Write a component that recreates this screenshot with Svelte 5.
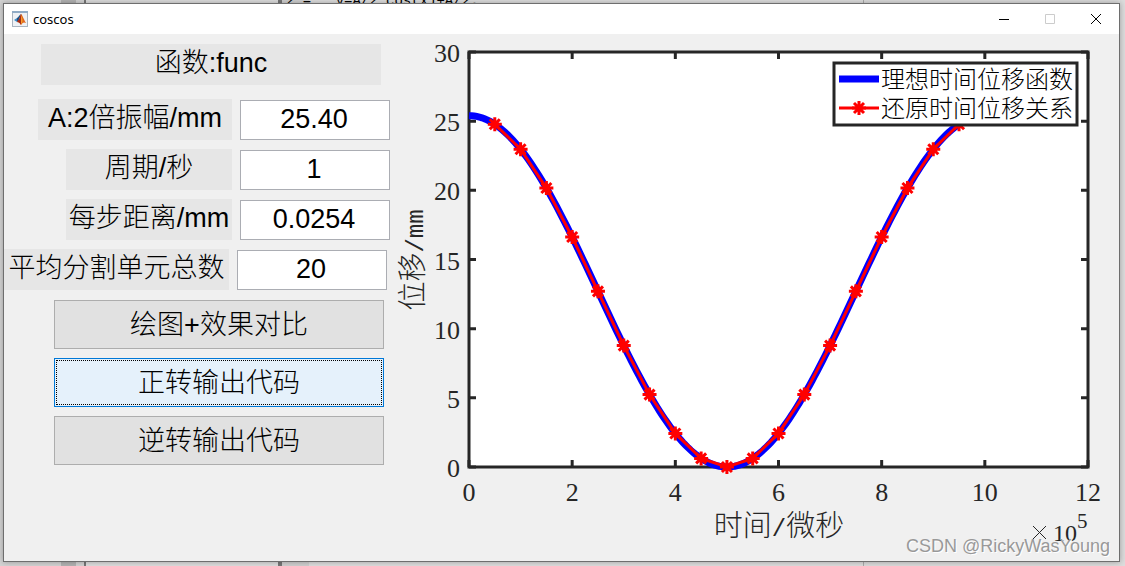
<script lang="ts">
  const fields = [
    { id: 'amplitude', label: 'A:2倍振幅/mm', value: '25.40', size: 'medium' },
    { id: 'period', label: '周期/秒', value: '1', size: 'small' },
    { id: 'step', label: '每步距离/mm', value: '0.0254', size: 'small' },
    { id: 'units', label: '平均分割单元总数', value: '20', size: 'large' }
  ];
  const actions = ['绘图+效果对比', '正转输出代码', '逆转输出代码'];

  let active = $state(1);

  // plot area inside the chart's viewBox
  const left = 79;
  const right = 698;
  const top = 18;
  const bottom = 433;

  const amplitude = 25.4;
  const px = (x: number) => left + (x / 12) * (right - left);
  const py = (y: number) => bottom - (y / 30) * (bottom - top);
  const func = (x: number) => (amplitude / 2) * Math.cos((x / 5) * Math.PI) + amplitude / 2;
  const toPoints = (xs: number[]) => xs.map((x) => `${px(x)},${py(func(x))}`).join(' ');

  const xTicks = [0, 2, 4, 6, 8, 10, 12];
  const yTicks = [0, 5, 10, 15, 20, 25, 30];
  const ideal = Array.from({ length: 201 }, (_, i) => i / 20);
  const restored = Array.from({ length: 19 }, (_, i) => (i + 1) / 2);
</script>

<div class="desktop">
  <div class="behind" aria-hidden="true">
    <span class="line-no">2 =</span>
    <span>y=A/2*cos(x)+A/2;</span>
  </div>

  <main class="window">
    <header>
      <svg class="logo" viewBox="0 0 16 16" width="16" height="16" aria-hidden="true">
        <rect x="0.5" y="0.5" width="15" height="15" fill="#eef1f5" stroke="#a9b4c0" />
        <path d="M0 0h16v2H0z" fill="#8fabc6" />
        <path d="M2 9l3-2 2 1-2 3z" fill="#3b8ac4" />
        <path d="M5 7c2-1 2-3 4-4L7 9l-2 2z" fill="#1d4f86" />
        <path d="M9 3c1 0 3 6 5 9-2-1-3-1-5 2-1-2-2-3-4-3 2-2 3-5 4-8z" fill="#e2681d" />
        <path d="M9 3c1 2 1 7 0 11-1-2-2-3-4-3 2-2 3-5 4-8z" fill="#a62b16" />
        <path d="M9 4c1 2 2 5 1 8l-1 1z" fill="#f5a12c" />
      </svg>
      <h1>coscos</h1>
      <div class="controls">
        <button aria-label="Minimize">
          <svg viewBox="0 0 10 10" width="10" height="10"><path d="M0 5.5h10" /></svg>
        </button>
        <button aria-label="Maximize" disabled>
          <svg viewBox="0 0 10 10" width="10" height="10"><path d="M.5.5h9v9h-9z" /></svg>
        </button>
        <button aria-label="Close">
          <svg viewBox="0 0 10 10" width="10" height="10"><path d="M0 0l10 10M10 0L0 10" /></svg>
        </button>
      </div>
    </header>

    <div class="content">
      <form onsubmit={(e) => e.preventDefault()}>
        <h2>函数:func</h2>
        {#each fields as field}
          <div class="row {field.size}">
            <label for={field.id}>{field.label}</label>
            <input id={field.id} type="text" bind:value={field.value} />
          </div>
        {/each}
        <div class="actions">
          {#each actions as action, i}
            <button type="button" class:active={active === i} onclick={() => (active = i)}>
              {action}
            </button>
          {/each}
        </div>
      </form>

      <svg class="chart" viewBox="0 0 729 527" role="img" aria-label="时间位移">
        <defs>
          <path id="star" d="M-7 0H7M0-7V7M-5-5L5 5M-5 5L5-5" />
        </defs>

        <rect class="plot" x={left} y={top} width={right - left} height={bottom - top} />
        {#each xTicks as tick}
          <path class="tick" d="M{px(tick)} {bottom}v-7M{px(tick)} {top}v7" />
          <text class="number" x={px(tick)} y="467" text-anchor="middle">{tick}</text>
        {/each}
        {#each yTicks as tick}
          <path class="tick" d="M{left} {py(tick)}h7M{right} {py(tick)}h-7" />
          <text class="number" x="70" y={py(tick) + 10} text-anchor="end">{tick}</text>
        {/each}

        <polyline class="ideal" points={toPoints(ideal)} />
        <polyline class="restored" points={toPoints(restored)} />
        {#each restored as x}
          <use class="restored" href="#star" x={px(x)} y={py(func(x))} />
        {/each}

        <text class="title" x="389" y="502" text-anchor="middle">时间<tspan>/</tspan>微秒</text>
        <text class="title" transform="translate(33 226) rotate(-90)" text-anchor="middle"
          >位移<tspan>/mm</tspan></text
        >
        <path class="times" d="M643 492l13 13M656 492l-13 13" />
        <text class="number exponent" x="663" y="507">10</text>
        <text class="number power" x="687" y="494">5</text>

        <rect class="plot" x="444" y="29" width="243" height="62" />
        <path class="ideal" d="M449 45h40" />
        <path class="restored" d="M449 74h40" />
        <use class="restored" href="#star" x="469" y="74" />
        <text class="legend" x="491" y="54">理想时间位移函数</text>
        <text class="legend" x="491" y="83">还原时间位移关系</text>
      </svg>
    </div>
  </main>
  <span class="watermark">CSDN @RickyWasYoung</span>
</div>

<style>
  :global(body) {
    margin: 0;
    background: #dcdcdc;
  }
  .desktop {
    position: relative;
    overflow: hidden;
    padding: 3px 5px 4px 3px;
    font-family: 'Liberation Sans', 'Noto Sans CJK SC', sans-serif;
    font-weight: 300;
    color: #000;
  }
  .behind {
    position: absolute;
    inset: 0;
    padding-left: 286px;
    line-height: 3px;
    font-size: 14px;
    font-family: 'Liberation Mono', monospace;
    background: linear-gradient(
      90deg,
      #d4d4d4 61px,
      #b4b4b4 61px 76px,
      #d4d4d4 76px 84px,
      #777 84px 86px,
      #dedede 86px 278px,
      #777 278px 282px,
      #d0d0d0 282px 309px,
      #dedede 309px 863px,
      #aaa 863px 864px,
      #dcdcdc 864px
    );
  }
  .line-no {
    margin-right: 16px;
  }
  .window {
    position: relative;
    border: 1px solid #6e6e6e;
    background: #f0f0f0;
    box-shadow: 0 0 6px rgba(0, 0, 0, 0.3);
  }
  header {
    display: flex;
    align-items: center;
    height: 30px;
    padding-left: 8px;
    background: #fff;
  }
  h1 {
    margin: 0 auto 0 5px;
    font: 400 13px 'Noto Sans', sans-serif;
  }
  .controls {
    display: flex;
    align-self: stretch;
  }
  .controls button {
    display: flex;
    align-items: center;
    justify-content: center;
    width: 46px;
    padding: 0;
    border: 0;
    background: none;
  }
  .controls path {
    fill: none;
    stroke: #000;
  }
  .controls button:disabled path {
    stroke: #ccc;
  }
  .content {
    display: flex;
    align-items: flex-start;
  }
  form {
    flex: none;
    display: flex;
    flex-direction: column;
    width: 386px;
    padding-top: 10px;
    font-size: 27px;
  }
  h2,
  label {
    height: 41px;
    background: #e6e6e6;
    line-height: 38px;
    text-align: center;
    white-space: nowrap;
  }
  h2 {
    margin: 0 9px 14px 37px;
    font-size: inherit;
    font-weight: inherit;
  }
  .row {
    display: flex;
    justify-content: flex-end;
    gap: 8px;
    margin-bottom: 9px;
  }
  .small label {
    width: 166px;
  }
  .medium label {
    width: 194px;
  }
  .large label {
    width: 225px;
  }
  .large {
    margin-right: 3px;
  }
  input {
    box-sizing: border-box;
    width: 150px;
    height: 40px;
    margin: 1px 0 0;
    padding: 0 2px 2px 0;
    border: 1px solid #abadb3;
    background: #fff;
    color: inherit;
    font: inherit;
    text-align: center;
  }
  .actions {
    display: flex;
    flex-direction: column;
    gap: 9px;
    margin: 1px 6px 0 50px;
  }
  .actions button {
    height: 49px;
    padding: 0 0 4px;
    border: 1px solid #adadad;
    background: #e1e1e1;
    color: inherit;
    font: inherit;
  }
  .actions .active {
    border-color: #0078d7;
    background: #e5f1fb;
    outline: 1px dotted #000;
    outline-offset: -3px;
  }
  .chart {
    flex: 1;
    min-width: 0;
    font-family: 'Liberation Serif', 'Noto Sans CJK SC', serif;
    fill: #262626;
  }
  .plot {
    fill: #fff;
    stroke: #262626;
    stroke-width: 3;
  }
  .tick {
    stroke: #262626;
    stroke-width: 3;
  }
  .number {
    font-size: 26px;
  }
  .exponent {
    font-size: 24px;
  }
  .power {
    font-size: 21px;
  }
  .title {
    font-size: 29px;
  }
  .title tspan {
    font-family: 'Liberation Mono', monospace;
    font-size: 24px;
  }
  .legend {
    font-size: 24px;
    fill: #000;
  }
  .times {
    stroke: #262626;
  }
  .ideal {
    fill: none;
    stroke: #00f;
    stroke-width: 7;
  }
  .restored {
    fill: none;
    stroke: #f00;
    stroke-width: 3;
  }
  .watermark {
    position: absolute;
    right: 15px;
    bottom: 9px;
    color: #999;
    font-size: 18px;
    text-shadow: 1px 1px 0 #fff;
  }
</style>
